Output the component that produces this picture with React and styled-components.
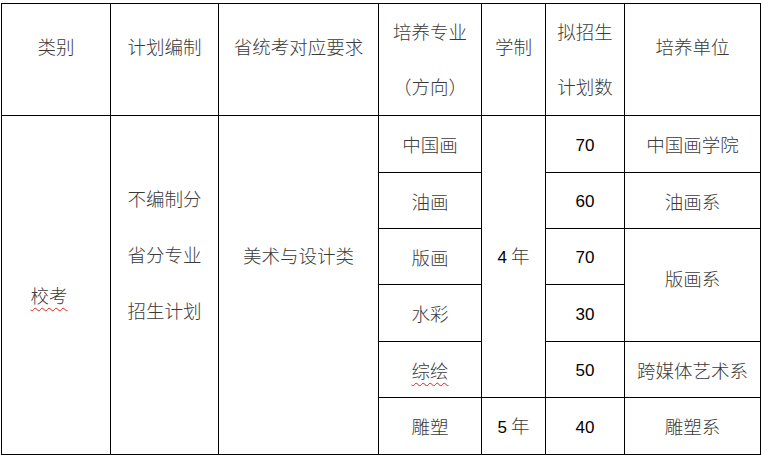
import React from "react";
import styled, { createGlobalStyle } from "styled-components";

const GlobalStyle = createGlobalStyle`
  html, body {
    margin: 0;
    background: #fff;
  }
  body {
    padding: 3px 0 0 1px;
  }
`;

const Table = styled.table`
  border-collapse: collapse;
  table-layout: fixed;
  width: 759px;
  font-family: "Noto Sans CJK SC", "Noto Sans", sans-serif;
  font-size: 18.5px;
  font-weight: 300;
  color: #3a3a3a;
`;

const Row = styled.tr`
  height: ${(p) => p.$h}px;
`;

const Cell = styled.td`
  border: 1px solid #000;
  padding: 0;
  text-align: center;
  vertical-align: ${(p) => (p.$top !== undefined ? "top" : "middle")};
  padding-top: ${(p) => p.$top || 0}px;
  padding-right: ${(p) => p.$pr || 0}px;
  padding-bottom: ${(p) => p.$pb || 0}px;
`;

const Line = styled.div`
  line-height: ${(p) => p.$lh || 30}px;
  white-space: nowrap;
`;

const Num = styled.span`
  font-family: "Liberation Sans", Arial, sans-serif;
  font-size: 17px;
  font-weight: 400;
  color: #000;
`;

const Typo = styled.span`
  text-decoration: underline wavy #e0201b;
  text-decoration-thickness: 1px;
  text-underline-offset: 4px;
`;

const cols = [109, 108, 160, 103, 64, 79, 136];

const rows = [
  { major: "中国画", num: "70", unit: "中国画学院" },
  { major: "油画", num: "60", unit: "油画系" },
  { major: "版画", num: "70", unit: "版画系", unitSpan: 2 },
  { major: "水彩", num: "30" },
  { major: <Typo>综绘</Typo>, num: "50", unit: "跨媒体艺术系" },
  { major: "雕塑", num: "40", unit: "雕塑系", years: "5" },
];

const heights = [57, 56, 56, 57, 56, 57];

export default function App() {
  return (
    <>
      <GlobalStyle />
      <Table>
        <colgroup>
          {cols.map((w, i) => (
            <col key={i} style={{ width: w }} />
          ))}
        </colgroup>
        <tbody>
          <Row $h={112}>
            <Cell $top={27}><Line>类别</Line></Cell>
            <Cell $top={27}><Line>计划编制</Line></Cell>
            <Cell $top={27}><Line>省统考对应要求</Line></Cell>
            <Cell $top={0}>
              <Line $lh={55}>培养专业</Line>
              <Line $lh={55}>（方向）</Line>
            </Cell>
            <Cell $top={27}><Line>学制</Line></Cell>
            <Cell $top={0}>
              <Line $lh={55}>拟招生</Line>
              <Line $lh={55}>计划数</Line>
            </Cell>
            <Cell $top={27}><Line>培养单位</Line></Cell>
          </Row>
          {rows.map((r, i) => (
            <Row key={i} $h={heights[i]}>
              {i === 0 && (
                <>
                  <Cell rowSpan={6} $top={164} $pr={14}>
                    <Line><Typo>校考</Typo></Line>
                  </Cell>
                  <Cell rowSpan={6} $top={54}>
                    <Line $lh={56}>不编制分</Line>
                    <Line $lh={56}>省分专业</Line>
                    <Line $lh={56}>招生计划</Line>
                  </Cell>
                  <Cell rowSpan={6} $top={124}>
                    <Line>美术与设计类</Line>
                  </Cell>
                </>
              )}
              <Cell><Line>{r.major}</Line></Cell>
              {i === 0 && (
                <Cell rowSpan={5}>
                  <Line><Num>4</Num> 年</Line>
                </Cell>
              )}
              {r.years && (
                <Cell>
                  <Line><Num>{r.years}</Num> 年</Line>
                </Cell>
              )}
              <Cell><Line><Num>{r.num}</Num></Line></Cell>
              {r.unit && (
                <Cell rowSpan={r.unitSpan || 1} $pb={r.unitSpan ? 14 : 0}>
                  <Line>{r.unit}</Line>
                </Cell>
              )}
            </Row>
          ))}
        </tbody>
      </Table>
    </>
  );
}
